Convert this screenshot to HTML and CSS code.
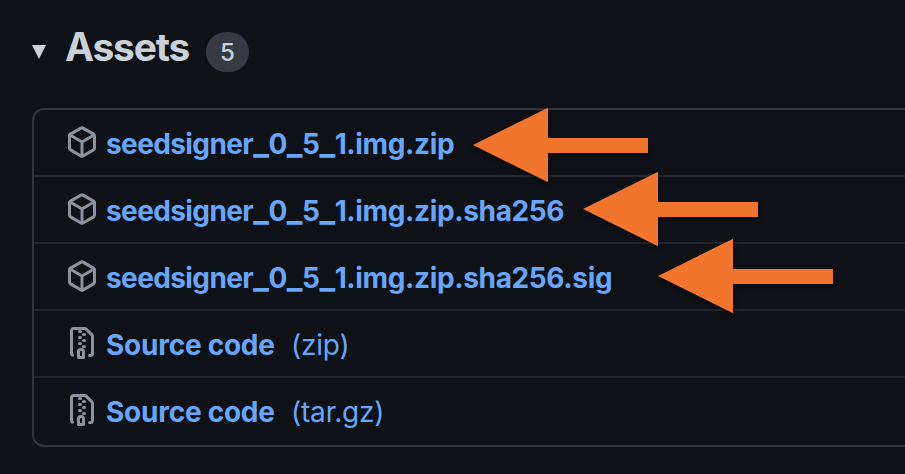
FILE: index.html
```html
<!DOCTYPE html>
<html lang="en">
<head>
<meta charset="utf-8">
<title>Assets</title>
<link rel="stylesheet" href="styles.css">
</head>
<body>
<svg class="defs" aria-hidden="true">
  <symbol id="package" viewBox="0 0 16 16"><path d="m8.878.392 5.25 3.045c.54.314.872.89.872 1.514v6.098a1.75 1.75 0 0 1-.872 1.514l-5.25 3.045a1.75 1.75 0 0 1-1.756 0l-5.25-3.045A1.75 1.75 0 0 1 1 11.049V4.951c0-.624.332-1.201.872-1.514L7.122.392a1.75 1.75 0 0 1 1.756 0ZM7.875 1.69l-4.63 2.685L8 7.133l4.755-2.758-4.63-2.685a.248.248 0 0 0-.25 0ZM2.5 5.677v5.372c0 .09.047.171.125.216l4.625 2.683V8.432Zm6.25 8.271 4.625-2.683a.25.25 0 0 0 .125-.216V5.677L8.75 8.432Z"/></symbol>
  <symbol id="file-zip" viewBox="0 0 16 16"><path d="M3.5 1.75v11.5c0 .09.048.173.126.217a.75.75 0 0 1-.752 1.298A1.748 1.748 0 0 1 2 13.25V1.75C2 .784 2.784 0 3.75 0h5.586c.464 0 .909.185 1.237.513l2.914 2.914c.329.328.513.773.513 1.237v8.586A1.75 1.75 0 0 1 12.25 15h-.5a.75.75 0 0 1 0-1.5h.5a.25.25 0 0 0 .25-.25V4.664a.25.25 0 0 0-.073-.177L9.513 1.573a.25.25 0 0 0-.177-.073H7.25a.75.75 0 0 1 0 1.5h-.5a.75.75 0 0 1 0-1.5h-3a.25.25 0 0 0-.25.25Zm3.75 8.75h.5c.966 0 1.75.784 1.75 1.75v3a.75.75 0 0 1-.75.75h-2.5a.75.75 0 0 1-.75-.75v-3c0-.966.784-1.75 1.75-1.75ZM6 5.25a.75.75 0 0 1 .75-.75h.5a.75.75 0 0 1 0 1.5h-.5A.75.75 0 0 1 6 5.25Zm.75 2.25h.5a.75.75 0 0 1 0 1.5h-.5a.75.75 0 0 1 0-1.5ZM8 6.75A.75.75 0 0 1 8.75 6h.5a.75.75 0 0 1 0 1.5h-.5A.75.75 0 0 1 8 6.75ZM8.75 3h.5a.75.75 0 0 1 0 1.5h-.5a.75.75 0 0 1 0-1.5ZM8 9.75A.75.75 0 0 1 8.75 9h.5a.75.75 0 0 1 0 1.5h-.5A.75.75 0 0 1 8 9.75Zm-1 2.5v2.25h1v-2.25a.25.25 0 0 0-.25-.25h-.5a.25.25 0 0 0-.25.25Z"/></symbol>
  <symbol id="arrow" viewBox="0 0 175 75"><path d="M0 37 75-.3V30h100v15H75v29.3Z"/></symbol>
</svg>
<header class="summary">
  <svg class="caret" viewBox="0 0 14 14"><path d="M0 0h14L7 14Z"/></svg>
  <h1 class="title">Assets</h1>
  <span class="counter">5</span>
</header>
<ul class="assets">
  <li class="row"><svg class="icon"><use href="#package"/></svg><a class="name"><span class="base">seedsigner</span><span class="version"><i>_</i>0<i>_</i>5<i>_</i>1</span>.img.zip</a><svg class="arrow a1"><use href="#arrow"/></svg></li>
  <li class="row"><svg class="icon"><use href="#package"/></svg><a class="name"><span class="base">seedsigner</span><span class="version"><i>_</i>0<i>_</i>5<i>_</i>1</span>.img.zip.sha256</a><svg class="arrow a2"><use href="#arrow"/></svg></li>
  <li class="row"><svg class="icon"><use href="#package"/></svg><a class="name"><span class="base">seedsigner</span><span class="version"><i>_</i>0<i>_</i>5<i>_</i>1</span>.img.zip.sha256.sig</a><svg class="arrow a3"><use href="#arrow"/></svg></li>
  <li class="row"><svg class="icon"><use href="#file-zip"/></svg><a class="name source">Source code</a><a class="kind">(zip)</a></li>
  <li class="row"><svg class="icon"><use href="#file-zip"/></svg><a class="name source">Source code</a><a class="kind">(tar.gz)</a></li>
</ul>
</body>
</html>
```
FILE: styles.css
```css
* { box-sizing: border-box; }
body {
  margin: 0;
  height: 474px;
  overflow: hidden;
  background: #0e1116;
  color: #c9d1d9;
  font-family: Inter, "Liberation Sans", sans-serif;
}
.defs { display: none; }
.summary {
  display: flex;
  align-items: flex-start;
  height: 108px;
  padding-left: 32px;
}
.caret { width: 14px; height: 14px; margin-top: 45px; fill: #c9d1d9; }
.title {
  width: 125px;
  margin: 23px 0 0 19px;
  font-size: 39px;
  line-height: 48px;
  font-weight: 700;
  letter-spacing: -1.2px;
  white-space: nowrap;
}
.counter {
  width: 43px;
  height: 40px;
  margin: 32px 0 0 16px;
  border-radius: 20px;
  background: #363a42;
  font-size: 24px;
  font-weight: 500;
  line-height: 42px;
  text-align: center;
}
.assets {
  list-style: none;
  width: 905px;
  margin: 0 0 0 32px;
  padding: 0;
  border: 2px solid #30353b;
  border-radius: 12px;
}
.row {
  position: relative;
  display: flex;
  align-items: flex-start;
  height: 67px;
  padding: 16px 0 0 32px;
  border-bottom: 2px solid #22262c;
  color: #68a6fb;
  font-size: 28px;
  line-height: 36px;
  white-space: nowrap;
}
.row:last-child { border-bottom: 0; }
.icon { width: 32px; height: 32px; margin-right: 8px; fill: #8b949e; flex: none; }
.name { font-weight: 700; letter-spacing: -.35px; }
.base { letter-spacing: -.6px; }
.version { font-kerning: none; letter-spacing: -.5px; }
.version i { font-size: 33px; font-style: normal; line-height: 1; }
.source { width: 185px; letter-spacing: -.25px; }
.kind { letter-spacing: -.2px; }
.arrow {
  position: absolute;
  width: 175px;
  height: 75px;
  overflow: visible;
  fill: #f1752d;
  filter: drop-shadow(0 2px 2px rgba(0, 0, 0, .5));
}
#arrow { overflow: visible; }
.a1 { left: 439px; top: -2px; }
.a2 { left: 549px; top: -5px; }
.a3 { left: 624px; top: -5px; }
```
